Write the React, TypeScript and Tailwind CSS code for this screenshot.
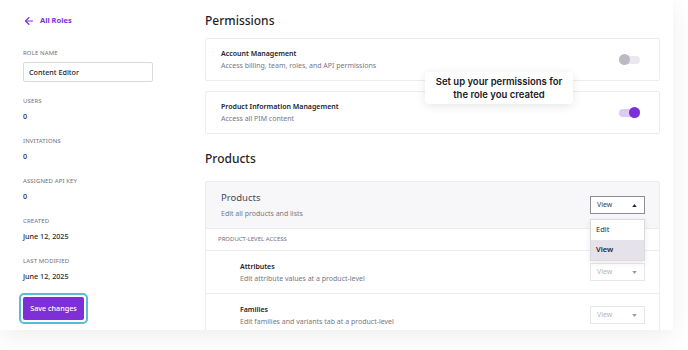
import { ArrowLeft } from "lucide-react";

function Toggle({ on }: { on: boolean }) {
    return (
        <div className="relative w-[21px] h-[10px] flex items-center">
            <div className={on ? "w-full h-[8px] rounded-full bg-[#dccbf3]" : "w-full h-[8px] rounded-full bg-[#ebe8ef]"} />
            <div
                className={
                    on
                        ? "absolute right-0 w-[11px] h-[11px] rounded-full bg-[#7b2fd6]"
                        : "absolute left-0 w-[11px] h-[11px] rounded-full bg-[#bdb9c3]"
                }
            />
        </div>
    );
}

function Caret({ up, muted }: { up?: boolean; muted?: boolean }) {
    return (
        <svg width="5" height="3" viewBox="0 0 6 4" className={up ? "" : "rotate-180"}>
            <path d="M0 4 L3 0 L6 4 Z" fill={muted ? "#9a9aa3" : "#2a2a33"} />
        </svg>
    );
}

function Select({ active }: { active?: boolean }) {
    return (
        <div
            className={
                active
                    ? "w-[55px] h-[18px] flex items-center justify-between pl-[6px] pr-[7px] bg-white border border-[#8d8d96] text-[7px] text-[#3b3b45]"
                    : "w-[55px] h-[18px] flex items-center justify-between pl-[6px] pr-[7px] bg-white border border-[#e6e6eb] text-[7px] text-[#b4b4bc]"
            }
        >
            <span>View</span>
            <Caret up={active} muted={!active} />
        </div>
    );
}

function Field({ label, value }: { label: string; value: string }) {
    return (
        <div className="flex flex-col">
            <div className="text-[6px] uppercase tracking-[0.02em] text-[#6f6f7a] leading-[10px]">{label}</div>
            <div className="mt-[5px] text-[7.2px] font-medium text-[#1f1f27] leading-[10px]">{value}</div>
        </div>
    );
}

function PermissionCard({ title, desc, on }: { title: string; desc: string; on: boolean }) {
    return (
        <div className="h-[43px] border border-[#ececf0] rounded-[2px] bg-white flex items-center justify-between pl-[15px] pr-[19px]">
            <div className="flex flex-col">
                <div className="text-[7px] font-semibold text-[#23232b] leading-[11px]">{title}</div>
                <div className="text-[7px] text-[#777783] leading-[11px] mt-[1px]">{desc}</div>
            </div>
            <Toggle on={on} />
        </div>
    );
}

function ProductRow({ title, desc }: { title: string; desc: string }) {
    return (
        <div className="h-[43px] border-b border-[#ededf1] flex items-center justify-between pl-[34px] pr-[14px]">
            <div className="flex flex-col">
                <div className="text-[7px] font-semibold text-[#23232b] leading-[11px]">{title}</div>
                <div className="text-[7px] text-[#777783] leading-[11px] mt-[1px]">{desc}</div>
            </div>
            <Select />
        </div>
    );
}

export default function App() {
    return (
        <div
            className="w-[688px] h-[350px] bg-white overflow-hidden"
            style={{ fontFamily: '"Noto Sans", "Open Sans", sans-serif' }}
        >
            <div className="relative w-[673px] h-[330px] bg-white flex shadow-[0_6px_24px_rgba(0,0,0,0.07)] overflow-hidden">
                {/* Sidebar */}
                <div className="w-[205px] shrink-0 pl-[23px] pt-[14px] flex flex-col">
                    <div className="flex items-center gap-[5px] h-[14px]">
                        <ArrowLeft size={12} strokeWidth={2.25} className="text-[#7b2fd6]" />
                        <span className="text-[7.5px] font-bold text-[#7b2fd6]">All Roles</span>
                    </div>
                    <div className="mt-[20px] text-[6px] uppercase tracking-[0.02em] text-[#6f6f7a] leading-[10px]">Role name</div>
                    <div className="mt-[4px] w-[130px] h-[20px] border border-[#d9d9df] rounded-[2px] flex items-center px-[5px] text-[7.2px] font-medium text-[#23232b]">
                        Content Editor
                    </div>
                    <div className="mt-[14px] flex flex-col gap-[15px]">
                        <Field label="Users" value="0" />
                        <Field label="Invitations" value="0" />
                        <Field label="Assigned API key" value="0" />
                        <Field label="Created" value="June 12, 2025" />
                        <Field label="Last modified" value="June 12, 2025" />
                    </div>
                    <div className="mt-[12px] -ml-[4px] w-[69px] p-[2px] border-2 border-[#5cbcd8] rounded-[5px]">
                        <div className="h-[23px] bg-[#7e2fd6] rounded-[2px] flex items-center justify-center text-[7.2px] font-medium text-white">
                            Save changes
                        </div>
                    </div>
                </div>

                {/* Main */}
                <div className="flex-1 pr-[13px] pt-[11px] flex flex-col">
                    <div className="text-[12px] font-medium text-[#1f1f27] leading-[20px]">Permissions</div>
                    <div className="mt-[7px] flex flex-col gap-[10px]">
                        <PermissionCard title="Account Management" desc="Access billing, team, roles, and API permissions" on={false} />
                        <PermissionCard title="Product Information Management" desc="Access all PIM content" on={true} />
                    </div>
                    <div className="mt-[15px] text-[12px] font-medium text-[#1f1f27] leading-[20px]">Products</div>
                    <div className="relative mt-[12px] border border-[#ececf0] rounded-[2px] flex flex-col">
                        <div className="h-[47px] bg-[#f7f7f9] border-b border-[#ececf0] flex items-center justify-between pl-[15px] pr-[14px]">
                            <div className="flex flex-col">
                                <div className="text-[9.5px] text-[#4a4a55] leading-[14px]">Products</div>
                                <div className="text-[7px] text-[#777783] leading-[11px] mt-[3px]">Edit all products and lists</div>
                            </div>
                            <Select active />
                        </div>
                        <div className="h-[22px] border-b border-[#ededf1] flex items-center pl-[12px] text-[6px] uppercase text-[#6f6f7a]">
                            Product-level access
                        </div>
                        <ProductRow title="Attributes" desc="Edit attribute values at a product-level" />
                        <ProductRow title="Families" desc="Edit families and variants tab at a product-level" />

                        {/* Dropdown menu */}
                        <div className="absolute top-[37px] right-[14px] w-[55px] bg-white border border-[#d9d9df] shadow-[0_2px_6px_rgba(0,0,0,0.08)] flex flex-col text-[7.5px] text-[#2a2a33]">
                            <div className="h-[20px] flex items-center px-[5px]">Edit</div>
                            <div className="h-[20px] flex items-center px-[5px] bg-[#e5e3e9] font-semibold">View</div>
                        </div>
                    </div>
                </div>

                {/* Tooltip */}
                <div
                    className="absolute left-[425px] top-[72px] w-[148px] h-[32px] bg-white rounded-[4px] shadow-[0_2px_10px_rgba(0,0,0,0.1)] flex flex-col items-center justify-center text-[9.5px] font-semibold text-[#1a1a1f] leading-[13px]"
                    style={{ fontFamily: 'Inter, sans-serif' }}
                >
                    <span>Set up your permissions for</span>
                    <span>the role you created</span>
                </div>
            </div>
        </div>
    );
}
